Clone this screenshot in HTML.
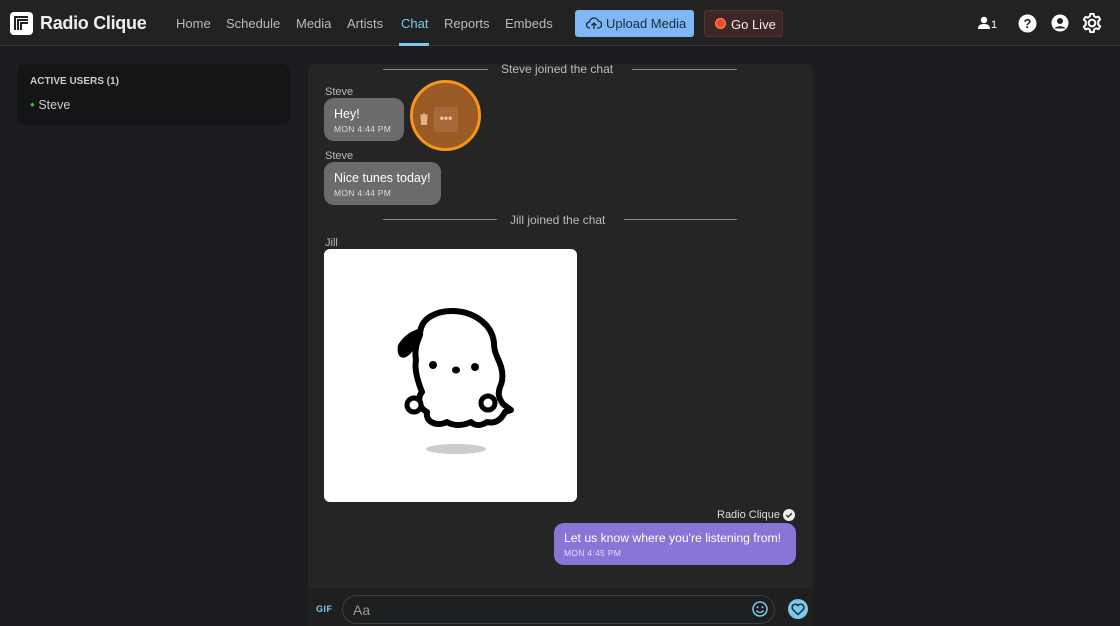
<!DOCTYPE html>
<html><head><meta charset="utf-8"><style>
*{box-sizing:border-box;margin:0;padding:0}
body{width:1120px;height:626px;overflow:hidden;background:#1c1d20;font-family:"Liberation Sans",sans-serif;color:#ddd;position:relative}
.hdr{position:absolute;left:0;top:0;width:1120px;height:46px;background:#222;border-bottom:1px solid #333}
.nav{position:absolute;top:16px;font-size:13px;color:#bbb;white-space:nowrap}
.abs{position:absolute;white-space:nowrap}
.name{position:absolute;font-size:11px;color:#bbb}
.bub{position:absolute;background:#6b6b6b;border-radius:10px;color:#fff;font-size:12.5px;padding:9px 10px;white-space:nowrap}
.bub small{display:block;font-size:8.5px;letter-spacing:.3px;color:#ddd;margin-top:3px}
.sys{position:absolute;font-size:12px;color:#bbb;white-space:nowrap}
.line{position:absolute;height:1px;background:#888}
</style></head><body>
<div class="hdr">
 <div class="abs" style="left:10px;top:12px;width:23px;height:23px;background:#fff;border-radius:4px">
  <svg width="23" height="23" viewBox="0 0 23 23"><path d="M5 18V5h13M8 18V8h10M11 18v-7h7" fill="none" stroke="#222" stroke-width="2"/></svg>
 </div>
 <div class="abs" style="left:40px;top:13px;font-size:18px;font-weight:bold;color:#eee;letter-spacing:-0.3px">Radio Clique</div>
 <div class="nav" style="left:176px">Home</div>
 <div class="nav" style="left:226px">Schedule</div>
 <div class="nav" style="left:296px">Media</div>
 <div class="nav" style="left:347px">Artists</div>
 <div class="nav" style="left:401px;color:#7ec8ea">Chat</div>
 <div class="abs" style="left:399px;top:43px;width:30px;height:3px;background:#7ec8ea"></div>
 <div class="nav" style="left:444px">Reports</div>
 <div class="nav" style="left:505px">Embeds</div>
 <div class="abs" style="left:575px;top:10px;width:119px;height:27px;background:#7fb8f5;border-radius:3px;color:#1a2a3a;font-size:13px;padding:6px 0 0 31px">Upload Media
  <svg class="abs" style="left:11px;top:7px" width="16" height="13" viewBox="0 0 16 13"><path d="M4 11H3.5a3 3 0 0 1 0-6 4.5 4.5 0 0 1 8.7-1A3.5 3.5 0 0 1 12 11h-1M8 12V6M5.5 8.5 8 6l2.5 2.5" fill="none" stroke="#1a2a3a" stroke-width="1.3"/></svg></div>
 <div class="abs" style="left:704px;top:10px;width:79px;height:27px;background:#3c2626;border:1px solid #553333;border-radius:3px;color:#eee;font-size:13px;padding:6px 0 0 26px">Go Live
  <span class="abs" style="left:10px;top:7px;width:11px;height:11px;border-radius:50%;background:#f04a2a;border:1px solid #ff8a6a"></span></div>
 <svg class="abs" style="left:978px;top:16px" width="20" height="14" viewBox="0 0 20 14"><circle cx="6" cy="4" r="3.2" fill="#fff"/><path d="M0 13c0-4 2.5-5 6-5s6 1 6 5z" fill="#fff"/><text x="13" y="12" fill="#fff" font-size="11" font-family="Liberation Sans">1</text></svg>
 <svg class="abs" style="left:1018px;top:14px" width="19" height="19" viewBox="0 0 19 19"><circle cx="9.5" cy="9.5" r="9" fill="#fff"/><text x="9.5" y="14" text-anchor="middle" font-size="13" font-weight="bold" fill="#222" font-family="Liberation Sans">?</text></svg>
 <svg class="abs" style="left:1051px;top:14px" width="18" height="18" viewBox="0 0 18 18"><circle cx="9" cy="9" r="8.5" fill="#fff"/><circle cx="9" cy="7" r="3" fill="#222"/><path d="M3.5 14.5c1.5-3 9.5-3 11 0" fill="#222"/></svg>
 <svg class="abs" style="left:1082px;top:13px" width="20" height="20" viewBox="0 0 24 24"><path d="M12 8a4 4 0 1 0 0 8 4 4 0 0 0 0-8z" fill="none" stroke="#fff" stroke-width="2.5"/><path d="M10 1h4l.6 3 2.3 1.3 2.9-1 2 3.4-2.3 2V14l2.3 2-2 3.4-2.9-1-2.3 1.3L14 23h-4l-.6-3-2.3-1.3-2.9 1-2-3.4 2.3-2V10l-2.3-2 2-3.4 2.9 1L9.4 4z" fill="none" stroke="#fff" stroke-width="2.4" stroke-linejoin="round"/></svg>
</div>

<div class="abs" style="left:17px;top:64px;width:273px;height:61px;background:#141516;border-radius:8px">
 <div class="abs" style="left:13px;top:12px;font-size:10px;font-weight:bold;color:#ccc">ACTIVE USERS (1)</div>
 <div class="abs" style="left:13px;top:34px;font-size:12.5px;color:#ccc"><span style="color:#3c3;font-size:8px;vertical-align:2px">●</span> Steve</div>
</div>

<div class="abs" style="left:308px;top:64px;width:505px;height:562px;background:#252525;border-radius:8px 8px 0 0"></div>
<div class="abs" style="left:308px;top:588px;width:505px;height:38px;background:#1f1f1f"></div>

<div class="line" style="left:383px;top:69px;width:105px"></div>
<div class="sys" style="left:501px;top:62px">Steve joined the chat</div>
<div class="line" style="left:632px;top:69px;width:105px"></div>

<div class="name" style="left:325px;top:86px">Steve</div>
<div class="bub" style="left:324px;top:98px;width:80px;height:43px">Hey!<small>MON 4:44 PM</small></div>
<div class="abs" style="left:410px;top:80px;width:71px;height:71px;border-radius:50%;background:#9a5a24;border:3px solid #f7941d"></div>
<svg class="abs" style="left:419px;top:113px" width="10" height="12" viewBox="0 0 10 12"><path d="M1 2h8M4 1h2M2 3h6l-.5 8.5h-5z" fill="#e4b38a" stroke="#e4b38a" stroke-width="1"/></svg>
<div class="abs" style="left:434px;top:107px;width:24px;height:25px;background:#a8693a;border-radius:2px;color:#e8c3a3;font-size:12px;text-align:center;line-height:22px;font-weight:bold">•••</div>

<div class="name" style="left:325px;top:150px">Steve</div>
<div class="bub" style="left:324px;top:162px;width:117px;height:43px">Nice tunes today!<small>MON 4:44 PM</small></div>

<div class="line" style="left:383px;top:219px;width:114px"></div>
<div class="sys" style="left:510px;top:213px">Jill joined the chat</div>
<div class="line" style="left:624px;top:219px;width:113px"></div>

<div class="name" style="left:325px;top:237px">Jill</div>
<div class="abs" style="left:324px;top:249px;width:253px;height:253px;background:#fff;border-radius:6px">
<svg width="253" height="253" viewBox="324 249 253 253">
 <ellipse cx="456" cy="449" rx="30" ry="5" fill="#ccc"/>
 <path d="M420 335c0-18 18-24 32-24 20 0 40 12 42 32 0 6 1 9 4 16 6 12 5 22 2 28-2 6-2 10 3 17l8 6-6 2c-4 8-10 12-18 10-6 4-12 4-16 0-8 4-18 4-24 0-10 5-22 0-20-10-8-4-10-14-5-20-4-10-8-22-6-32-2-12 2-20 4-25z" fill="#fff" stroke="#000" stroke-width="6" stroke-linejoin="round"/>
 <path d="M398 345c6-10 14-14 20-16 0 12-2 22-12 28-4 2-10 0-8-12z" fill="#000"/>
 <circle cx="414" cy="405" r="7" fill="#fff" stroke="#000" stroke-width="5"/>
 <circle cx="488" cy="403" r="7" fill="#fff" stroke="#000" stroke-width="5"/>
 <circle cx="433" cy="365" r="4" fill="#000"/><circle cx="475" cy="367" r="4" fill="#000"/><ellipse cx="456" cy="370" rx="4" ry="3.5" fill="#000"/>
</svg></div>

<div class="abs" style="left:717px;top:509px;font-size:11px;color:#ddd">Radio Clique</div>
<svg class="abs" style="left:783px;top:509px" width="12" height="12" viewBox="0 0 12 12"><circle cx="6" cy="6" r="6" fill="#eee"/><path d="M3.3 6.2 5.2 8 8.8 4.3" fill="none" stroke="#333" stroke-width="1.5"/></svg>
<div class="bub" style="left:554px;top:523px;width:242px;height:42px;background:#8a75d6;padding:8px 10px;font-size:12.2px">Let us know where you're listening from!<small style="color:#e4dcff">MON 4:45 PM</small></div>

<div class="abs" style="left:316px;top:604px;font-size:9px;font-weight:bold;color:#7ec8ea;letter-spacing:.5px">GIF</div>
<div class="abs" style="left:342px;top:595px;width:433px;height:29px;border:1px solid #3a3f44;border-radius:15px;background:#1c1e20;font-size:14px;color:#999;padding:6px 0 0 10px">Aa</div>
<svg class="abs" style="left:752px;top:601px" width="16" height="16" viewBox="0 0 16 16"><circle cx="8" cy="8" r="7" fill="none" stroke="#7ec8ea" stroke-width="1.5"/><circle cx="5.5" cy="6.3" r="1" fill="#7ec8ea"/><circle cx="10.5" cy="6.3" r="1" fill="#7ec8ea"/><path d="M4.5 9.5c1.5 2.5 5.5 2.5 7 0" fill="none" stroke="#7ec8ea" stroke-width="1.3"/></svg>
<div class="abs" style="left:788px;top:599px;width:20px;height:20px;border-radius:50%;background:#7ec8ea"></div>
<svg class="abs" style="left:791px;top:603px" width="14" height="13" viewBox="0 0 14 13"><path d="M7 11.5 1.8 6.5A3 3 0 0 1 7 2.5a3 3 0 0 1 5.2 4z" fill="none" stroke="#1c2a33" stroke-width="1.5"/></svg>
</body></html>
